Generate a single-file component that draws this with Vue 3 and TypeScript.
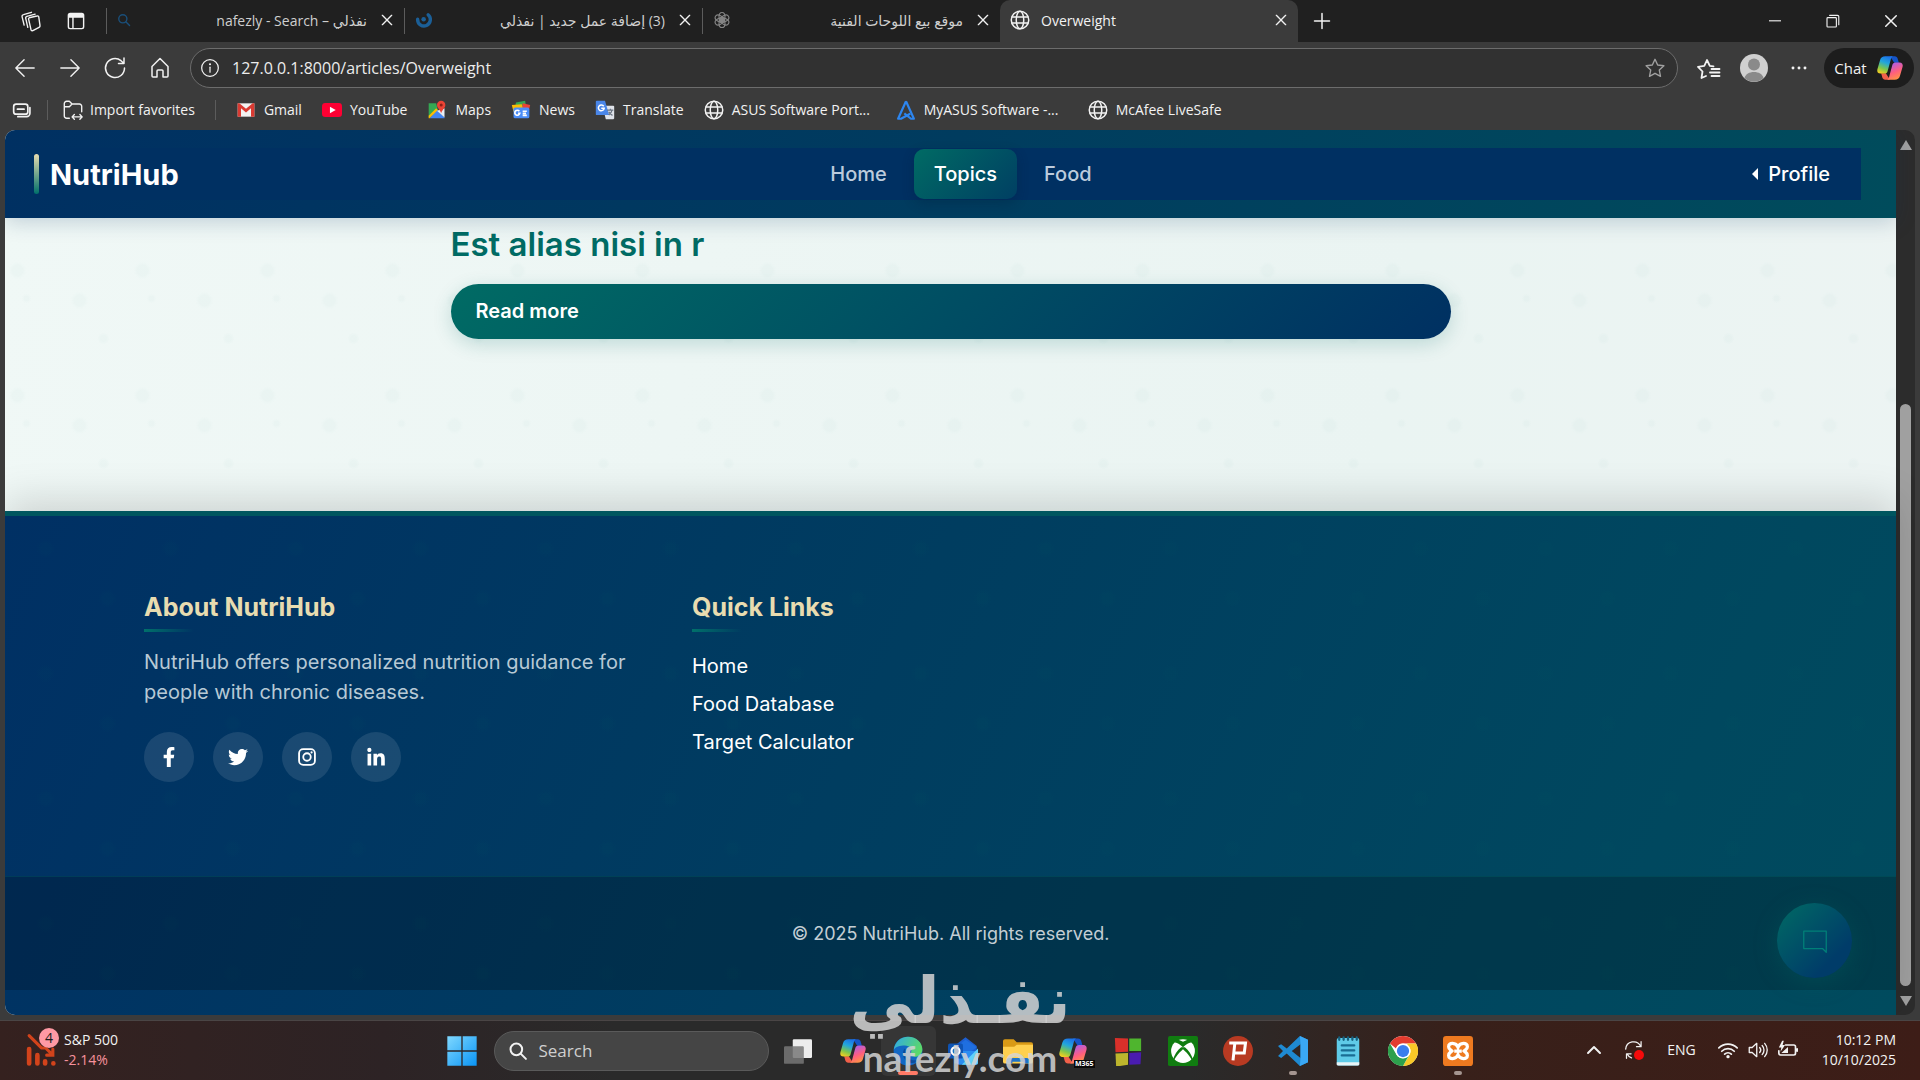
<script setup lang="ts">
import { ref } from 'vue'

interface Tab {
  title: string
  icon: string
  rtl: boolean
  active: boolean
}

interface Item {
  label: string
  icon: string
}

const stroke = (body: string, width = 1.5): string =>
  `<g fill="none" stroke="currentColor" stroke-width="${width}" stroke-linecap="round" stroke-linejoin="round">${body}</g>`

const copilot =
  '<defs><linearGradient id="cpA" x1=".6" y1="0" x2=".25" y2="1"><stop offset="0" stop-color="#1c74e8"/><stop offset=".35" stop-color="#22a6dc"/><stop offset=".7" stop-color="#7cc64e"/><stop offset="1" stop-color="#f5d020"/></linearGradient><linearGradient id="cpB" x1=".3" y1="0" x2=".7" y2="1"><stop offset="0" stop-color="#ff9a3d"/><stop offset=".45" stop-color="#ff5f7e"/><stop offset="1" stop-color="#a65cf0"/></linearGradient></defs>' +
  '<path fill="#1554c8" d="M12 2h4c1.600 0 2.200.8 2.600 2l1 3.500h-4z"/><path fill="#f2604a" d="M12 22H8c-1.600 0-2.200-.8-2.600-2l-1-3.500h4z"/>' +
  '<path fill="url(#cpA)" d="M8 2h6.500c-1 .5-1.500 1.500-1.900 3L10 14.500c-.4 1.500-1.200 2.300-2.800 2.300H4C1.700 16.800.6 15.200 1.200 13L3.500 5.200C4.200 3 5.500 2 8 2z"/>' +
  '<g transform="rotate(180 12 12)"><path fill="url(#cpB)" d="M8 2h6.500c-1 .5-1.500 1.500-1.900 3L10 14.500c-.4 1.500-1.200 2.300-2.800 2.300H4C1.700 16.800.6 15.200 1.200 13L3.500 5.200C4.200 3 5.500 2 8 2z"/></g>'

const icons: Record<string, string> = {
  workspaces: stroke('<path d="M10 8.500 18.500 6.500a1.500 1.500 0 0 1 2 1.200l1.300 9a2 2 0 0 1-1 2.200L14 22.500a1.500 1.500 0 0 1-2-1L9.500 10.500a1.500 1.500 0 0 1 .5-2zM8.500 19l-2.200-9.500A2 2 0 0 1 7.500 7L16.500 4.500M4.500 16.500 2.300 7.500A2 2 0 0 1 3.800 5L12.500 2.500"/>'),
  tabsPane: '<path fill="currentColor" d="M5 2h14a3 3 0 0 1 3 3v14a3 3 0 0 1-3 3H5a3 3 0 0 1-3-3V5a3 3 0 0 1 3-3zm-1.300 6v11c0 .8.5 1.300 1.300 1.300h2.500V8zm5.500 0v12.300H19c.8 0 1.300-.5 1.300-1.300V8z"/>',
  search: stroke('<circle cx="10" cy="10" r="7"/><path d="m15.500 15.500 6 6"/>', 2.4),
  nafezly: '<g fill="none" stroke="#1b5f97" stroke-width="4.500" stroke-linecap="round"><path d="M3.500 11a8.500 8.500 0 1 0 14-6"/></g><circle cx="11.500" cy="11" r="3" fill="#1b5f97"/>',
  gpt: stroke('<circle cx="12" cy="12" r="3.500"/><ellipse cx="12" cy="7.500" rx="4" ry="5.500"/><ellipse cx="12" cy="7.500" rx="4" ry="5.500" transform="rotate(60 12 12)"/><ellipse cx="12" cy="7.500" rx="4" ry="5.500" transform="rotate(120 12 12)"/><ellipse cx="12" cy="7.500" rx="4" ry="5.500" transform="rotate(180 12 12)"/><ellipse cx="12" cy="7.500" rx="4" ry="5.500" transform="rotate(240 12 12)"/><ellipse cx="12" cy="7.500" rx="4" ry="5.500" transform="rotate(300 12 12)"/>'),
  globe: stroke('<circle cx="12" cy="12" r="10.500"/><ellipse cx="12" cy="12" rx="4.500" ry="10.500"/><path d="M2.500 8.500h19M2.500 15.500h19"/>', 1.8),
  close: stroke('<path d="m5 5 14 14M19 5 5 19"/>', 2),
  plus: stroke('<path d="M12 3v18M3 12h18"/>', 1.8),
  minimize: '<path fill="currentColor" d="M4 11h16v1.500H4z"/>',
  restore: stroke('<path d="M4 8.500a1 1 0 0 1 1-1h10.500a1 1 0 0 1 1 1V19a1 1 0 0 1-1 1H5a1 1 0 0 1-1-1zM7.500 4.500H18a1.700 1.700 0 0 1 1.700 1.700V17"/>'),
  back: stroke('<path d="M22 12H2M11 3l-9 9 9 9"/>'),
  forward: stroke('<path d="M2 12h20M13 3l9 9-9 9"/>'),
  reload: stroke('<path d="M21.500 12A9.500 9.500 0 1 1 18 4.700L20.500 7M21 2v5.500h-5.500"/>'),
  home: stroke('<path d="M4 10.500 12 2.500l8 8V20a1 1 0 0 1-1 1h-4v-6a1 1 0 0 0-1-1h-4a1 1 0 0 0-1 1v6H5a1 1 0 0 1-1-1z"/>'),
  info: stroke('<circle cx="12" cy="12" r="10"/><path d="M12 11v6"/>') + '<circle cx="12" cy="7.500" r="1.300" fill="currentColor"/>',
  star: stroke('<path d="m12 2.500 2.900 6.200 6.800.9-5 4.700 1.300 6.800-6-3.300-6 3.300 1.300-6.800-5-4.700 6.800-.9z"/>'),
  favourites: stroke('<path d="M9 20 4.500 22l1-6.500L1 10.800l6.300-.9L10 4l2.800 5.900 3.700.5M14.500 13h8M13 16.500h9.500M14.500 20h8"/>', 1.8),
  more: '<g fill="currentColor"><circle cx="3" cy="12" r="2.200"/><circle cx="12" cy="12" r="2.200"/><circle cx="21" cy="12" r="2.200"/></g>',
  copilot,
  sidebar: stroke('<rect x="2" y="5" width="17" height="12" rx="3"/><path d="M6.500 11h8M21.500 9v7a4 4 0 0 1-4 4H7"/>', 2),
  importFolder: stroke('<path d="M8 21H5a2.500 2.500 0 0 1-2.500-2.500V5A2.500 2.500 0 0 1 5 2.500h3l3 3h8A2.500 2.500 0 0 1 21.500 8v6M2.500 8.500H8l3-3M11 19.500h11M13.500 17 11 19.500l2.500 2.500M19.500 17l2.500 2.500-2.500 2.500"/>'),
  gmail: '<path fill="#f2f2f2" d="M2 4h20v16H2z"/><path fill="#d93a32" d="M2 4h2l8 6.500L20 4h2v16h-4V10l-6 5-6-5v10H2z"/>',
  youtube: '<rect x="0" y="3.500" width="24" height="17" rx="4" fill="#ff0033"/><path fill="#fff" d="m9.500 8 7 4-7 4z"/>',
  maps: '<path fill="#34a853" d="M2 4h9l2 8-11 9z"/><path fill="#4285f4" d="m12 12 9 9v1H3z"/><path fill="#fbbc04" d="m2 19 9-9 2 2-10 10H2z"/><path fill="#e8eef7" d="m12 13 9-3v11z"/><path fill="#ea4335" d="M17 1a5 5 0 0 1 5 5c0 4-4 5.500-5 10-1-4.500-5-6-5-10a5 5 0 0 1 5-5z"/><circle cx="17" cy="6" r="1.800" fill="#8d1f18"/>',
  news: '<path fill="#34a853" d="m6 3 11-2 1 7H5z"/><path fill="#ea4335" d="m14 4 9 2-2 8h-8z"/><path fill="#fbbc04" d="m1 6 12-1 2 9H3z"/><rect x="3" y="9" width="19" height="13" rx="2" fill="#4b8df8"/><path fill="none" stroke="#fff" stroke-width="2" d="M10 13.500a3 3 0 1 0 .5 2.500H8.500M14 13.500h5M14 16h4M14 18.500h5"/>',
  translate: '<path fill="#dfe3ea" d="M9 7h13a1 1 0 0 1 1 1v14a1 1 0 0 1-1 1h-9z"/><path fill="#4a86e8" d="M2 1h10l5 17H2a1 1 0 0 1-1-1V2a1 1 0 0 1 1-1z"/><path fill="none" stroke="#fff" stroke-width="1.800" d="M10.500 7.500a3.500 3.500 0 1 0 .5 2.500H7.500"/><path fill="none" stroke="#6a7482" stroke-width="1.500" d="M14.500 12H22M18.500 10.500V12M20.500 12c-.5 3-2 4.500-4 6M16.500 14c1 2.500 2.500 3.500 4.500 4.500"/>',
  myasus: '<g fill="none" stroke="#2d86f0" stroke-width="2.600" stroke-linejoin="round"><path d="M12 1.500 2.500 22.500H6L17 16.500M12 1.500l9.500 21H18L10 16"/></g>',
  bars: '<g stroke="#d2431b" stroke-linecap="round" fill="none"><path stroke-width="4.500" d="M4 16v14M12 22v8"/><path stroke-width="4.500" d="M19.500 28v2M27.500 30v0"/><path stroke-width="3" d="m4 3 12 12h4l7 7M27 16v6h-6"/></g>',
  windows: '<defs><linearGradient id="win" x1="0" y1="0" x2="1" y2="1"><stop offset="0" stop-color="#7fd8ff"/><stop offset="1" stop-color="#0a94f5"/></linearGradient></defs><path fill="url(#win)" d="M1 1h10.500v10.500H1zM12.500 1H23v10.500H12.500zM1 12.500h10.500V23H1zM12.500 12.500H23V23H12.500z"/>',
  taskview: '<rect x="7.500" y="2" width="16.500" height="16" rx="1" fill="#ededed"/><rect x="0" y="8" width="17" height="15" rx="1" fill="#777" fill-opacity=".85"/>',
  edge: '<defs><linearGradient id="edA" x1="0" y1="0" x2="1" y2=".4"><stop offset="0" stop-color="#2fa9e8"/><stop offset="1" stop-color="#5bd86b"/></linearGradient></defs><circle cx="12" cy="12" r="11.500" fill="#1267c4"/><path fill="url(#edA)" d="M.6 11C1.500 4.500 6 .5 12 .5c7 0 11.500 5 11.500 10 0 4-3 6-6 6-2.500 0-4-1-3.500-2.500 2-3-.5-6.500-4.500-6.500C5.500 7.500 2 8.500.6 11z"/><path fill="#0c4c9c" d="M9.500 10c-3 3-1.500 9 3 11 3.500 1.500 7 0 9-2.500-5 2-10 .5-11-3.500-.4-2 0-4-1-5z"/>',
  outlook: '<path fill="#1d5fd0" d="M5 8 14 1l9 7v14H5z"/><path fill="#1f6fe0" d="m5 10 9-7 9 6-11 8z"/><path fill="#2b8df0" d="M7 12h17v9a2 2 0 0 1-2 2H9a2 2 0 0 1-2-2z"/><path fill="#5fd0fa" d="m24 10-13 13h11a2 2 0 0 0 2-2z"/><rect y="6" width="12" height="12" rx="1.500" fill="#0f54b4"/><circle cx="6" cy="12" r="3.200" fill="none" stroke="#fff" stroke-width="1.800"/>',
  explorer: '<path fill="#d99a16" d="M0 4a1.500 1.500 0 0 1 1.500-1.500h7L11 5h11.500A1.500 1.500 0 0 1 24 6.500V12H0z"/><path fill="#ffd04f" d="M0 8.500h9L11 7h13v13.500a1.500 1.500 0 0 1-1.500 1.500h-21A1.500 1.500 0 0 1 0 20.500z"/><path fill="#1f74c9" d="M5 17.500h14a2 2 0 0 1 2 2V22h-4.500v-1.500h-9V22H3v-2.500a2 2 0 0 1 2-2z"/>',
  m365: copilot,
  squares: '<path fill="#d9302a" d="M1.500 1.500 12 2v10.500l-10 .5z"/><path fill="#4fb52e" d="M13 2h9.500v10H13z"/><path fill="#bdb52d" d="m2 14 10-.5V23l-9.500 1.500z"/><path fill="#4a1cb0" d="m13 13.500 9.500-.5-.5 9.500-9 .5z"/>',
  xbox: '<rect width="24" height="24" rx="1.500" fill="#107c10"/><circle cx="12" cy="12" r="9.500" fill="#fff"/><path fill="#107c10" d="M4.500 5.500c2-1 5 1 7.500 3.500C14.500 6.500 17.500 4.500 19.500 5.500l-3-3L12 4.500l-4.500-2zM12 10.500c4 3.500 7 7.500 7 9.500l1-1c-1-4-3.500-7.500-6.500-10h-3C7.500 11.500 5 15 4 19l1 1c0-2 3-6 7-9.500z"/>',
  pshape: '<circle cx="12" cy="12" r="12" fill="#b83a22"/><path fill="none" stroke="#fff" stroke-width="2.400" d="M5 5.500h13l-1 8H8.500M9.500 5.500 8 19.500"/>',
  vscode: '<path fill="#1f8ad2" d="m17.500 0 6.500 3v18l-6.500 3L7 14l-4.500 3.500L0 16l4-4-4-4 2.500-1.500L7 10zm.5 6.500L11 12l7 5.500z"/><path fill="#3aa8f5" d="m17.500 0 6.500 3v18l-6.500 3 .5-6.500v-11z"/>',
  notepad: '<rect x="3" y="1.500" width="18" height="22" rx="1.500" fill="#5fcbe8"/><path fill="#e9f4f7" d="M3 21h18v1.500a1 1 0 0 1-1 1H4a1 1 0 0 1-1-1z"/><path stroke="#1a6d93" stroke-width="1.800" stroke-linecap="round" d="M7 7.500h10M7 11.500h10M7 15.500h10"/><path stroke="#17617f" stroke-width="1.800" stroke-linecap="round" d="M5 1v2M8.500 1v2M12 1v2M15.500 1v2M19 1v2"/>',
  chrome: '<circle cx="12" cy="12" r="12" fill="#fff"/><path fill="#e33b2e" d="M12 0a12 12 0 0 1 10.400 6H12a6 6 0 0 0-5.600 4L1.600 6A12 12 0 0 1 12 0z"/><path fill="#f9c927" d="M22.400 6A12 12 0 0 1 12 24l5.200-9A6 6 0 0 0 15.500 7V6z"/><path fill="#2da04c" d="M1.600 6A12 12 0 0 0 12 24l5-9a6 6 0 0 1-10.200 0z"/><circle cx="12" cy="12" r="6" fill="#fff"/><circle cx="12" cy="12" r="4.900" fill="#3b7ded"/>',
  xampp: '<rect width="24" height="24" rx="2.500" fill="#ee7a20"/><path fill="none" stroke="#fff" stroke-width="2.600" d="M12 9c-1.500-4-7.500-4-7.500-.5 0 2 1.500 2.500 2.500 3.500-1 1-2.500 1.500-2.500 3.500 0 3.500 6 3.500 7.500-.5 1.500 4 7.500 4 7.500.5 0-2-1.500-2.500-2.500-3.500 1-1 2.500-1.500 2.500-3.500C19.500 5 13.500 5 12 9zM9 12h6"/>',
  chevron: stroke('<path d="m4 16 8-8 8 8"/>', 2.6),
  sync: stroke('<path d="M2 11A9.500 9.500 0 0 1 20 7.500M20.500 2v6H15M9 21.500A9 9 0 0 1 4 17M3 22v-5.500h5.500"/>', 1.5) + '<circle cx="18" cy="18" r="6" fill="#f50b0b"/>',
  wifi: stroke('<path d="M1 9.500a15.500 15.500 0 0 1 22 0M4.500 13.500a10.500 10.500 0 0 1 15 0M8 17a5.700 5.700 0 0 1 8 0"/>', 2) + '<circle cx="12" cy="20" r="2" fill="currentColor"/>',
  sound: stroke('<path d="M1.500 9v6H5l5.500 5V4L5 9zM14 9a4.500 4.500 0 0 1 0 6M17 6.500a8 8 0 0 1 0 11M20 4a12 12 0 0 1 0 16"/>', 1.6),
  battery: stroke('<path d="M9 6h10a2 2 0 0 1 2 2v8a2 2 0 0 1-2 2H3a2 2 0 0 1-2-2v-3M23 10.500v3"/>', 2) + '<path fill="currentColor" d="M4 15.500 12 8.500v7zM5 1 1 9h3l-1 5 5.500-8H5.500L7 1z"/>',
  chat: stroke('<path d="M3 4h18v17l-3-3H3z"/>', 1),
  facebook: '<path transform="translate(4.500 0) scale(.047)" fill="currentColor" d="M279.140 288l14.220-92.660h-88.910v-60.130c0-25.350 12.420-50.060 52.240-50.060h40.420V6.260S260.430 0 225.360 0c-73.220 0-121.080 44.380-121.080 124.720v70.620H22.890V288h81.390v224h100.170V288z"/>',
  twitter: '<path transform="scale(.047)" fill="currentColor" d="M459.370 151.716c.325 4.548.325 9.097.325 13.645 0 138.720-105.583 298.558-298.558 298.558-59.452 0-114.680-17.219-161.137-47.106 8.447.974 16.568 1.299 25.340 1.299 49.055 0 94.213-16.568 130.274-44.832-46.132-.975-84.792-31.188-98.112-72.772 6.498.974 12.995 1.624 19.818 1.624 9.421 0 18.843-1.300 27.614-3.573-48.081-9.747-84.143-51.980-84.143-102.985v-1.299c13.969 7.797 30.214 12.670 47.431 13.319-28.264-18.843-46.781-51.005-46.781-87.391 0-19.492 5.197-37.360 14.294-52.954 51.655 63.675 129.300 105.258 216.365 109.807-1.624-7.797-2.599-15.918-2.599-24.040 0-57.828 46.782-104.934 104.934-104.934 30.213 0 57.502 12.670 76.670 33.137 23.715-4.548 46.456-13.320 66.599-25.340-7.798 24.366-24.366 44.833-46.132 57.827 21.117-2.273 41.584-8.122 60.426-16.243-14.292 20.791-32.161 39.308-52.628 54.253z"/>',
  instagram: '<g fill="none" stroke="currentColor" stroke-width="2.200"><rect x="2.500" y="2.500" width="19" height="19" rx="5"/><circle cx="12" cy="12" r="4.500"/></g><circle cx="17.500" cy="6.500" r="1.300" fill="currentColor"/>',
  linkedin: '<path transform="translate(1.500 1) scale(.047)" fill="currentColor" d="M100.280 448H7.400V148.900h92.880zM53.790 108.100C24.090 108.100 0 83.500 0 53.800a53.790 53.790 0 0 1 107.580 0c0 29.700-24.100 54.300-53.790 54.300zM447.900 448h-92.680V302.400c0-34.700-.7-79.200-48.290-79.200-48.290 0-55.690 37.700-55.690 76.700V448h-92.780V148.900h89.080v40.800h1.300c12.400-23.500 42.690-48.300 87.880-48.300 94 0 111.280 61.900 111.280 142.300V448z"/>',
}

const tabs: Tab[] = [
  { title: 'nafezly - Search – نفذلي', icon: 'search', rtl: false, active: false },
  { title: '(3) إضافة عمل جديد | نفذلي', icon: 'nafezly', rtl: true, active: false },
  { title: 'موقع بيع اللوحات الفنية', icon: 'gpt', rtl: true, active: false },
  { title: 'Overweight', icon: 'globe', rtl: false, active: true },
]

const bookmarks: (Item & { long?: boolean })[] = [
  { label: 'Gmail', icon: 'gmail' },
  { label: 'YouTube', icon: 'youtube' },
  { label: 'Maps', icon: 'maps' },
  { label: 'News', icon: 'news' },
  { label: 'Translate', icon: 'translate' },
  { label: 'ASUS Software Port...', icon: 'globe', long: true },
  { label: 'MyASUS Software -...', icon: 'myasus', long: true },
  { label: 'McAfee LiveSafe', icon: 'globe' },
]

const socials: Item[] = [
  { label: 'Facebook', icon: 'facebook' },
  { label: 'Twitter', icon: 'twitter' },
  { label: 'Instagram', icon: 'instagram' },
  { label: 'LinkedIn', icon: 'linkedin' },
]

const apps: (Item & { running?: boolean; focused?: boolean })[] = [
  { label: 'Task view', icon: 'taskview' },
  { label: 'Copilot', icon: 'copilot' },
  { label: 'Edge', icon: 'edge', focused: true },
  { label: 'Outlook', icon: 'outlook' },
  { label: 'File Explorer', icon: 'explorer' },
  { label: 'Microsoft 365', icon: 'm365' },
  { label: 'Tools', icon: 'squares' },
  { label: 'Xbox', icon: 'xbox' },
  { label: 'Pichon', icon: 'pshape' },
  { label: 'Visual Studio Code', icon: 'vscode', running: true },
  { label: 'Notepad', icon: 'notepad' },
  { label: 'Chrome', icon: 'chrome' },
  { label: 'XAMPP', icon: 'xampp', running: true },
]

const navItems = ['Home', 'Topics', 'Food']
const quickLinks = ['Home', 'Food Database', 'Target Calculator']
const current = ref('Topics')
const address = ref('127.0.0.1:8000/articles/Overweight')
const query = ref('')
</script>

<template>
  <div class="desktop">
    <div class="tabstrip">
      <button class="strip-btn" aria-label="Workspaces"><svg class="i22" viewBox="0 0 24 24" v-html="icons.workspaces" /></button>
      <button class="strip-btn" aria-label="Tab actions"><svg class="i20" viewBox="0 0 24 24" v-html="icons.tabsPane" /></button>
      <div v-for="tab in tabs" :key="tab.title" class="tab" :class="{ active: tab.active, rtl: tab.rtl, pushed: !tab.active }">
        <svg class="tab-icon" :class="tab.icon" viewBox="0 0 24 24" v-html="icons[tab.icon]" />
        <span class="tab-title" :dir="tab.rtl ? 'rtl' : 'ltr'">{{ tab.title }}</span>
        <button class="tab-close" aria-label="Close tab"><svg class="i16" viewBox="0 0 24 24" v-html="icons.close" /></button>
      </div>
      <button class="strip-btn new-tab" aria-label="New tab"><svg class="i20" viewBox="0 0 24 24" v-html="icons.plus" /></button>
      <div class="window-controls">
        <button aria-label="Minimize"><svg class="i18" viewBox="0 0 24 24" v-html="icons.minimize" /></button>
        <button aria-label="Restore"><svg class="i18" viewBox="0 0 24 24" v-html="icons.restore" /></button>
        <button aria-label="Close"><svg class="i18" viewBox="0 0 24 24" v-html="icons.close" /></button>
      </div>
    </div>

    <div class="toolbar">
      <button class="tool" aria-label="Back"><svg class="i22" viewBox="0 0 24 24" v-html="icons.back" /></button>
      <button class="tool" aria-label="Forward"><svg class="i22" viewBox="0 0 24 24" v-html="icons.forward" /></button>
      <button class="tool" aria-label="Reload"><svg class="i24" viewBox="0 0 24 24" v-html="icons.reload" /></button>
      <button class="tool" aria-label="Home page"><svg class="i24" viewBox="0 0 24 24" v-html="icons.home" /></button>
      <div class="address">
        <svg class="i20" viewBox="0 0 24 24" v-html="icons.info" />
        <input v-model="address" type="text" aria-label="Address" />
        <button aria-label="Add to favorites"><svg class="i22 dim" viewBox="0 0 24 24" v-html="icons.star" /></button>
      </div>
      <button class="tool" aria-label="Favorites"><svg class="i24" viewBox="0 0 24 24" v-html="icons.favourites" /></button>
      <button class="tool" aria-label="Account">
        <svg class="avatar" viewBox="0 0 28 28"><circle cx="14" cy="14" r="14" fill="#d0d0d0" /><circle cx="14" cy="10.500" r="6" fill="#8a8a8a" /><path fill="#8a8a8a" d="M4.500 24c1-4 5-6 9.500-6s8.500 2 9.500 6a14 14 0 0 1-19 0z" /></svg>
      </button>
      <button class="tool" aria-label="More"><svg class="i16" viewBox="0 0 24 24" v-html="icons.more" /></button>
      <button class="chat">Chat <svg class="i28" viewBox="0 0 24 24" v-html="icons.copilot" /></button>
    </div>

    <div class="bookmarks">
      <button class="side" aria-label="Show tabs"><svg class="i20" viewBox="0 0 24 24" v-html="icons.sidebar" /></button>
      <span class="divider" />
      <a class="mark import" href="#"><svg class="i22" viewBox="0 0 24 24" v-html="icons.importFolder" />Import favorites</a>
      <span class="divider" />
      <a v-for="mark in bookmarks" :key="mark.label" class="mark" :class="{ long: mark.long }" href="#"><svg class="i20" viewBox="0 0 24 24" v-html="icons[mark.icon]" />{{ mark.label }}</a>
    </div>

    <div class="view">
      <div class="site">
        <header class="site-header">
          <div class="header-inner">
            <a class="brand" href="#">NutriHub</a>
            <nav class="site-nav">
              <a v-for="item in navItems" :key="item" href="#" :class="{ current: item === current }" @click.prevent="current = item">{{ item }}</a>
            </nav>
            <a class="profile" href="#"><span class="caret" />Profile</a>
          </div>
        </header>

        <main class="content">
          <article class="entry">
            <h1>Est alias nisi in r</h1>
            <a class="read-more" href="#">Read more</a>
          </article>
        </main>

        <footer class="site-footer">
          <div class="footer-grid">
            <section>
              <h2>About NutriHub</h2>
              <p>NutriHub offers personalized nutrition guidance for people with chronic diseases.</p>
              <div class="socials">
                <a v-for="s in socials" :key="s.label" href="#" :aria-label="s.label"><svg class="i20" viewBox="0 0 24 24" v-html="icons[s.icon]" /></a>
              </div>
            </section>
            <section>
              <h2>Quick Links</h2>
              <ul>
                <li v-for="link in quickLinks" :key="link"><a href="#">{{ link }}</a></li>
              </ul>
            </section>
          </div>
          <div class="legal">© 2025 NutriHub. All rights reserved.</div>
        </footer>
        <button class="assistant" aria-label="Open chat"><svg viewBox="0 0 24 24" v-html="icons.chat" /></button>
      </div>
      <div class="scrollbar">
        <span class="arrow up" />
        <span class="thumb" />
        <span class="arrow down" />
      </div>
    </div>

    <div class="taskbar">
      <div class="widget">
        <span class="widget-icon"><svg viewBox="0 0 32 34" v-html="icons.bars" /><span class="badge">4</span></span>
        <span class="quote"><span>S&amp;P 500</span><span class="loss">-2.14%</span></span>
      </div>
      <div class="apps">
        <button class="app" aria-label="Start"><svg class="i32" viewBox="0 0 24 24" v-html="icons.windows" /></button>
        <label class="finder">
          <svg class="i20" viewBox="0 0 24 24" v-html="icons.search" />
          <input v-model="query" type="text" placeholder="Search" aria-label="Search" />
        </label>
        <button v-for="app in apps" :key="app.label" class="app" :class="{ running: app.running, focused: app.focused }" :aria-label="app.label">
          <svg :class="app.icon === 'copilot' || app.icon === 'taskview' ? 'i28' : 'i30'" viewBox="0 0 24 24" v-html="icons[app.icon]" />
          <span v-if="app.icon === 'm365'" class="tag">M365</span>
        </button>
      </div>
      <div class="tray">
        <button aria-label="Hidden icons"><svg class="i18" viewBox="0 0 24 24" v-html="icons.chevron" /></button>
        <button class="sync" aria-label="Updates"><svg class="i20" viewBox="0 0 24 24" v-html="icons.sync" /></button>
        <span class="lang">ENG</span>
        <svg class="i20" viewBox="0 0 24 24" v-html="icons.wifi" />
        <svg class="i20" viewBox="0 0 24 24" v-html="icons.sound" />
        <svg class="i20" viewBox="0 0 24 24" v-html="icons.battery" />
        <div class="clock"><span>10:12 PM</span><span>10/10/2025</span></div>
      </div>
    </div>

    <div class="watermark">
      <span class="mark-ar" dir="rtl" lang="ar">نفـذلي</span>
      <span class="mark-en">nafezly.com</span>
    </div>
  </div>
</template>

<style>
body {
  margin: 0;
  background: #3b3b3b;
}
</style>

<style scoped>
.desktop {
  position: relative;
  display: flex;
  flex-direction: column;
  min-height: 100vh;
  overflow: hidden;
  background: #3b3b3b;
  color: #f2f2f2;
  font-family: 'Open Sans', 'Noto Sans', 'DejaVu Sans', sans-serif;
  font-size: 14px;
}
.desktop * {
  box-sizing: border-box;
}
button {
  display: flex;
  align-items: center;
  justify-content: center;
  padding: 0;
  border: 0;
  background: none;
  color: inherit;
  font: inherit;
}
a {
  color: inherit;
  text-decoration: none;
}
svg {
  display: block;
  flex: none;
}
input {
  min-width: 0;
  padding: 0;
  border: 0;
  outline: 0;
  background: none;
  color: inherit;
  font: inherit;
}
.i16 { width: 16px; height: 16px; }
.i18 { width: 18px; height: 18px; }
.i20 { width: 20px; height: 20px; }
.i22 { width: 22px; height: 22px; }
.i24 { width: 24px; height: 24px; }
.i28 { width: 28px; height: 28px; }
.i30 { width: 30px; height: 30px; }
.i32 { width: 32px; height: 32px; }
.dim { color: #a0a0a0; }

/* Browser tabs */
.tabstrip {
  display: flex;
  align-items: stretch;
  height: 42px;
  padding-left: 8px;
  background: #202020;
}
.strip-btn {
  width: 45px;
}
.new-tab {
  width: 48px;
}
.tab {
  display: flex;
  align-items: center;
  gap: 11px;
  width: 298px;
  padding: 0 8px 2px 10px;
  color: #cfcfcf;
}
.tab.pushed {
  border-left: 1px solid #5c5c5c;
  border-image: linear-gradient(transparent 20%, #5c5c5c 20%, #5c5c5c 80%, transparent 80%) 1;
}
.tab:nth-child(3) {
  margin-left: 8px;
}
.tab-icon {
  width: 18px;
  height: 18px;
}
.tab-icon.search {
  width: 14px;
  color: #1a4f7a;
}
.tab-icon.gpt {
  color: #858585;
}
.tab-icon.globe {
  width: 20px;
  height: 20px;
}
.tab-title {
  flex: 1;
  overflow: hidden;
  white-space: nowrap;
}
.pushed .tab-title {
  text-align: right;
}
.rtl .tab-title {
  text-align: start;
}
.tab-close {
  width: 18px;
  height: 24px;
  color: #f0f0f0;
}
.tab.active {
  border-radius: 10px 10px 0 0;
  background: #3b3b3b;
  color: #f2f2f2;
}
.window-controls {
  display: flex;
  margin-left: auto;
}
.window-controls button {
  width: 58px;
}

/* Address row */
.toolbar {
  display: flex;
  align-items: center;
  gap: 5px;
  height: 51px;
  padding: 0 6px 0 5px;
}
.tool {
  width: 40px;
  height: 40px;
}
.address {
  display: flex;
  flex: 1;
  align-items: center;
  gap: 12px;
  height: 40px;
  margin: 0 6px 0 5px;
  padding: 0 11px 0 9px;
  border: 1px solid #6c6c6c;
  border-radius: 20px;
  background: #313131;
}
.address input {
  flex: 1;
  color: #ececec;
  font-size: 16px;
}
.avatar {
  width: 28px;
  height: 28px;
}
.chat {
  gap: 9px;
  width: 90px;
  height: 40px;
  border-radius: 20px;
  background: #1d1d1d;
  font-size: 15px;
}

/* Bookmarks */
.bookmarks {
  display: flex;
  align-items: center;
  gap: 20px;
  height: 37px;
  padding: 0 12px 4px;
  white-space: nowrap;
}
.divider {
  width: 1px;
  height: 20px;
  background: #5c5c5c;
}
.mark {
  display: flex;
  align-items: center;
  gap: 8px;
}
.mark.long {
  width: 172px;
}
.mark.import {
  margin: 0 0 0 -6px;
  gap: 6px;
}
.side {
  margin-right: -5px;
}

/* Page view */
.view {
  display: flex;
  flex: 1;
  margin: 0 5px 5px;
  border-radius: 10px;
  overflow: hidden;
}
.site {
  position: relative;
  display: flex;
  flex: 1;
  flex-direction: column;
  background: linear-gradient(100deg, #f0f8f6, #eaf4f2 70%, #edf4f3);
  font-family: Inter, 'Liberation Sans', sans-serif;
  font-size: 20px;
}
.site-header {
  position: relative;
  padding: 18px 35px 18px 29px;
  background: linear-gradient(100deg, #003062, #003c5f 50%, #004c5c);
  box-shadow: 0 4px 20px rgba(0, 48, 96, 0.2);
}
.header-inner {
  display: flex;
  align-items: center;
  justify-content: space-between;
  height: 52px;
  background: #003062;
}
.brand {
  display: flex;
  align-items: center;
  gap: 11px;
  color: #fff;
  font-size: 29px;
  font-weight: 700;
}
.brand::before {
  width: 5px;
  height: 40px;
  border-radius: 3px;
  background: linear-gradient(#e8dcb0, #00706a);
  content: '';
}
.site-nav {
  display: flex;
  gap: 7px;
}
.site-nav a {
  padding: 0 20px;
  border-radius: 10px;
  color: #bccbdc;
  font-weight: 500;
  line-height: 50px;
}
.site-nav .current {
  background: linear-gradient(135deg, #006b64, #003f63);
  box-shadow: 0 4px 12px rgba(0, 30, 60, 0.3);
  color: #fff;
}
.profile {
  display: flex;
  align-items: center;
  gap: 10px;
  padding: 0 31px 0 9px;
  color: #fff;
  font-weight: 500;
}
.caret {
  border: 6px solid transparent;
  border-right-color: #fff;
  border-left: 0;
}
.content {
  flex: 1;
  padding: 5px 24px 172px;
  background:
    radial-gradient(circle, rgba(0, 110, 100, 0.02) 5px, transparent 9px) -50px -10px / 125px 125px,
    radial-gradient(circle, rgba(0, 110, 100, 0.02) 5px, transparent 9px) 12px 20px / 125px 125px,
    radial-gradient(circle, rgba(0, 110, 100, 0.02) 2px, transparent 5px) -41px 18px / 125px 125px,
    radial-gradient(circle, rgba(0, 110, 100, 0.02) 3px, transparent 6px) 36px 58px / 125px 125px;
}
.entry {
  max-width: 1000px;
  margin: 0 auto;
}
.entry h1 {
  margin: 0 0 19px;
  color: #006b64;
  font-size: 33px;
  font-weight: 600;
  line-height: 42px;
}
.read-more {
  display: block;
  padding: 0 25px;
  border-radius: 28px;
  background: linear-gradient(135deg, #006b64, #003062);
  box-shadow: 0 5px 19px rgba(0, 107, 100, 0.2);
  color: #fff;
  font-weight: 600;
  line-height: 55px;
}

/* Footer */
.site-footer {
  padding-bottom: 25px;
  border-top: 5px solid #00565f;
  background:
    radial-gradient(circle, rgba(0, 110, 100, 0.04) 5px, transparent 9px) 40px 20px / 125px 125px,
    radial-gradient(circle, rgba(0, 110, 100, 0.04) 5px, transparent 9px) -22px -30px / 125px 125px,
    linear-gradient(115deg, #003064, #003d60 45%, #00485f 85%, #004b5e);
  box-shadow: 0 -10px 38px rgba(0, 0, 0, 0.15);
  color: #fff;
}
.footer-grid {
  display: grid;
  grid-template-columns: repeat(3, 1fr);
  gap: 31px;
  padding: 76px 139px 94px;
}
.footer-grid h2 {
  margin: 0 0 15px;
  color: #e8dcb0;
  font-size: 25px;
  font-weight: 700;
  line-height: 30px;
}
.footer-grid h2::after {
  display: block;
  width: 50px;
  height: 3px;
  margin-top: 7px;
  background: linear-gradient(90deg, #00706a, transparent);
  content: '';
}
.footer-grid p {
  margin: 0 0 25px;
  color: #b7c9d5;
  line-height: 30px;
}
.socials {
  display: flex;
  gap: 19px;
}
.socials a {
  display: flex;
  align-items: center;
  justify-content: center;
  width: 50px;
  height: 50px;
  border-radius: 50%;
  background: rgba(255, 255, 255, 0.1);
}
.footer-grid ul {
  display: flex;
  flex-direction: column;
  gap: 8px;
  margin: 19px 0 0;
  padding: 0;
  line-height: 30px;
  list-style: none;
}
.legal {
  border-top: 1px solid rgba(0, 110, 110, 0.3);
  background: rgba(0, 0, 0, 0.2);
  color: #c3ced4;
  font-size: 18px;
  line-height: 113px;
  text-align: center;
}
.assistant {
  position: absolute;
  right: 44px;
  bottom: 37px;
  width: 75px;
  height: 75px;
  border-radius: 50%;
  background: linear-gradient(135deg, #006b64, #003c69 75%);
  box-shadow: 0 5px 25px rgba(0, 107, 100, 0.3);
  color: #008078;
}
.assistant svg {
  width: 34px;
  height: 30px;
}

.scrollbar {
  display: flex;
  flex-direction: column;
  align-items: center;
  width: 19px;
  padding: 10px 0 9px;
  background: #2c2c2c;
}
.arrow {
  border: 6px solid transparent;
}
.arrow.up {
  border-top: 0;
  border-bottom: 10px solid #a0a0a0;
}
.arrow.down {
  border-bottom: 0;
  border-top: 10px solid #a0a0a0;
}
.thumb {
  flex: 1;
  width: 11px;
  margin: 254px 0 10px;
  border-radius: 6px;
  background: #a0a0a0;
}

/* Taskbar */
.taskbar {
  display: grid;
  grid-template-columns: 1fr auto 1fr;
  align-items: center;
  height: 60px;
  border-top: 1px solid #4a4545;
  background: linear-gradient(90deg, #35211f, #2d2325 20%, #2a2a2a 32%, #2a2a2a 62%, #38201a 76%, #3d1d17);
}
.widget {
  display: flex;
  align-items: center;
  gap: 6px;
  padding: 0 0 2px 25px;
}
.widget-icon {
  position: relative;
}
.widget-icon svg {
  width: 33px;
  height: 36px;
}
.badge {
  position: absolute;
  top: -4px;
  left: 14px;
  width: 20px;
  border-radius: 50%;
  background: #ff99a4;
  color: #1a1a1a;
  line-height: 20px;
  text-align: center;
}
.quote,
.clock {
  display: flex;
  flex-direction: column;
  line-height: 20px;
}
.loss {
  color: #f7919c;
}
.apps {
  display: flex;
  align-items: center;
}
.app {
  position: relative;
  width: 55px;
  height: 50px;
}
.app.focused {
  border-radius: 6px;
  background: rgba(255, 255, 255, 0.06);
}
.app.running::after,
.app.focused::after {
  position: absolute;
  bottom: 1px;
  left: 50%;
  width: 8px;
  height: 4px;
  margin-left: -4px;
  border-radius: 2px;
  background: #a59590;
  content: '';
}
.app.focused::after {
  width: 20px;
  margin-left: -10px;
  background: #ff7a66;
}
.tag {
  position: absolute;
  right: 6px;
  bottom: 8px;
  padding: 0 1px;
  background: #0a0a0a;
  color: #fff;
  font-size: 7px;
  font-weight: 700;
  line-height: 8px;
}
.finder {
  display: flex;
  align-items: center;
  gap: 11px;
  width: 275px;
  height: 40px;
  margin: 0 2px 0 4px;
  padding: 0 13px;
  border: 1px solid #5a5a5a;
  border-radius: 20px;
  background: #454545;
  font-size: 17px;
}
.finder input {
  flex: 1;
}
.finder input::placeholder {
  color: #cfcfcf;
  opacity: 1;
}
.tray {
  display: flex;
  align-items: center;
  justify-content: flex-end;
  gap: 10px;
  padding: 0 24px 2px 0;
}
.sync {
  margin: 0 13px 0 11px;
}
.lang {
  margin-right: 12px;
}
.clock {
  margin-left: 14px;
  text-align: right;
}

.watermark {
  position: absolute;
  right: 0;
  bottom: 0;
  left: 0;
  display: flex;
  flex-direction: column;
  align-items: center;
  color: rgba(212, 212, 212, 0.85);
  font-weight: 700;
  pointer-events: none;
}
.mark-ar {
  font-family: 'DejaVu Sans', sans-serif;
  font-size: 65px;
  line-height: 70px;
}
.mark-en {
  font-family: Lato, sans-serif;
  font-size: 37px;
  line-height: 44px;
}
</style>
